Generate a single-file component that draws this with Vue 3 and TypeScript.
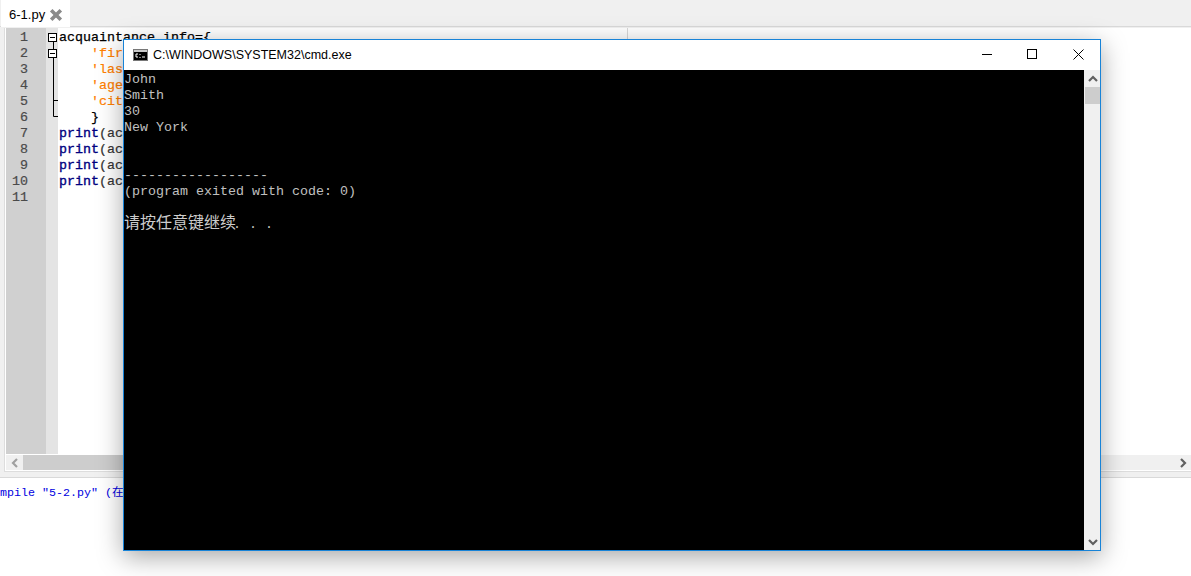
<script setup lang="ts">
const codeLines: { kind: string; text: string }[] = [
  { kind: 'plain', text: 'acquaintance_info={' },
  { kind: 'str', text: "    'fir" },
  { kind: 'str', text: "    'las" },
  { kind: 'str', text: "    'age" },
  { kind: 'str', text: "    'cit" },
  { kind: 'plain', text: '    }' },
  { kind: 'call', text: '(ac' },
  { kind: 'call', text: '(ac' },
  { kind: 'call', text: '(ac' },
  { kind: 'call', text: '(ac' },
  { kind: 'plain', text: ' ' },
]
const output: string[] = ['John', 'Smith', '30', 'New York', ' ', ' ', '------------------', '(program exited with code: 0)']
</script>

<template>
  <div class="app">
    <div class="tabbar">
      <div class="tab">
        <span class="tab-name">6-1.py</span>
        <svg class="tab-close" width="14" height="14" viewBox="0 0 14 14">
          <path d="M2.2 2.2 L11.8 11.8 M11.8 2.2 L2.2 11.8" stroke="#8a8a8a" stroke-width="3.6" fill="none" />
        </svg>
      </div>
    </div>
    <div class="editor-frame">
      <div class="editor-inner">
        <div class="editor">
          <div class="gutter">
            <div v-for="n in 11" :key="n" class="line-no">{{ n }}</div>
          </div>
          <div class="fold">
            <svg width="12" height="96" viewBox="0 0 12 96">
              <path d="M7.5 14 V88.5 H12 M7.5 72.5 H12" stroke="#000" fill="none" />
              <rect x="2.5" y="5.5" width="8" height="8" fill="#fff" stroke="#000" />
              <path d="M4 9.5 H9" stroke="#000" />
              <rect x="2.5" y="21.5" width="8" height="8" fill="#fff" stroke="#000" />
              <path d="M4 25.5 H9" stroke="#000" />
            </svg>
          </div>
          <div class="code">
            <div class="edge-guide"></div>
            <div v-for="(l, i) in codeLines" :key="i" class="code-line" :class="l.kind"><span v-if="l.kind === 'call'" class="kw">print</span>{{ l.text }}</div>
          </div>
        </div>
        <div class="hscroll">
          <div class="arrow-btn">
            <svg width="8" height="10" viewBox="0 0 8 10"><path d="M6 1 L2 5 L6 9" stroke="#a0a0a0" stroke-width="2.2" fill="none" /></svg>
          </div>
          <div class="hthumb"></div>
          <div class="arrow-btn">
            <svg width="8" height="10" viewBox="0 0 8 10"><path d="M2 1 L6 5 L2 9" stroke="#606060" stroke-width="2.2" fill="none" /></svg>
          </div>
        </div>
      </div>
    </div>
    <div class="output-panel">mpile "5-2.py" (在</div>

    <div class="cmd">
      <div class="titlebar">
        <svg class="cmd-icon" width="15" height="12" viewBox="0 0 15 12">
          <rect x="0.5" y="0.5" width="14" height="11" fill="#000" stroke="#777" />
          <rect x="1" y="1" width="13" height="2" fill="#c8c8c8" />
          <path d="M3 5 H5 M3 8 H5 M3 5 V8 M7 5 V6 M7 8 V9 M9 8 H12" stroke="#fff" fill="none" />
        </svg>
        <span class="cmd-title">C:\WINDOWS\SYSTEM32\cmd.exe</span>
        <div class="win-buttons">
          <svg width="10" height="10" viewBox="0 0 10 10"><path d="M0 5.5 H10" stroke="#000" /></svg>
          <svg width="10" height="10" viewBox="0 0 10 10"><rect x="0.5" y="0.5" width="9" height="9" fill="none" stroke="#000" /></svg>
          <svg class="close-x" width="11" height="11" viewBox="0 0 11 11"><path d="M0.5 0.5 L10.5 10.5 M10.5 0.5 L0.5 10.5" stroke="#000" fill="none" /></svg>
        </div>
      </div>
      <div class="cmd-body">
        <div class="console">
          <div v-for="(t, i) in output" :key="i" class="console-line">{{ t }}</div>
          <div class="console-line press"><span class="press-cjk">请按任意键继续</span><span class="press-dots">. . .</span></div>
        </div>
        <div class="vscroll">
          <div class="v-arrow">
            <svg width="10" height="8" viewBox="0 0 10 8"><path d="M1 6 L5 2 L9 6" stroke="#606060" stroke-width="2.2" fill="none" /></svg>
          </div>
          <div class="vthumb"></div>
          <div class="v-space"></div>
          <div class="v-arrow">
            <svg width="10" height="8" viewBox="0 0 10 8"><path d="M1 2 L5 6 L9 2" stroke="#606060" stroke-width="2.2" fill="none" /></svg>
          </div>
        </div>
      </div>
    </div>
  </div>
</template>

<style>
html, body { margin: 0; background: #fff; overflow: hidden; }
</style>

<style scoped>
.app {
  position: relative;
  width: 1191px;
  height: 576px;
  overflow: hidden;
  display: flex;
  flex-direction: column;
  background: #fff;
}
.tabbar {
  height: 26px;
  background: #f0f0f0;
  border-bottom: 1px solid #d9d9d9;
  display: flex;
  flex: none;
  padding-left: 1px;
}
.tab {
  width: 69px;
  height: 27px;
  box-sizing: border-box;
  background: #fff;
  display: flex;
  align-items: center;
  padding: 2px 0 0 8px;
  gap: 4px;
  font: 13px "Liberation Sans", Arial, sans-serif;
  color: #000;
}
.tab-close { flex: none; }
.editor-frame {
  flex: none;
  height: 444px;
  padding: 1px 0 5px 4px;
  background: #f0f0f0;
  border-bottom: 1px solid #d9d9d9;
}
.editor-inner {
  height: 442px;
  padding: 0 0 1px 1px;
  background: #fff;
  border-left: 1px solid #ddd;
  border-bottom: 1px solid #ddd;
  display: flex;
  flex-direction: column;
}
.editor {
  height: 426px;
  display: flex;
  background: #fff;
  flex: none;
}
.gutter {
  width: 40px;
  padding-top: 2px;
  box-sizing: border-box;
  background: #d0d0d0;
  flex: none;
}
.line-no {
  height: 16px;
  padding-right: 18px;
  text-align: right;
  font: 13.33px/16px "Liberation Mono", monospace;
  color: #4a4a4a;
  -webkit-text-stroke: 0.2px #4a4a4a;
}
.fold {
  width: 12px;
  background: #e4e4e4;
  flex: none;
}
.fold svg { display: block; }
.code {
  position: relative;
  flex: 1;
  padding: 2px 0 0 1px;
  background: #fff;
  overflow: hidden;
}
.edge-guide {
  position: absolute;
  left: 569px;
  top: 0;
  bottom: 0;
  width: 1px;
  background: #d8d8d8;
}
.code-line {
  height: 16px;
  font: 13.33px/16px "Liberation Mono", monospace;
  white-space: pre;
  color: #000;
}
.code-line.plain { -webkit-text-stroke: 0.25px #000; }
.code-line.str { color: #ff8000; -webkit-text-stroke: 0.2px #ff8000; }
.code-line.call { color: #333; -webkit-text-stroke: 0.2px #333; }
.kw { color: #000080; -webkit-text-stroke: 0.35px #000080; }
.hscroll {
  height: 15px;
  margin-top: 1px;
  display: flex;
  background: #f0f0f0;
  flex: none;
}
.arrow-btn {
  width: 17px;
  flex: none;
  display: flex;
  align-items: center;
  justify-content: center;
}
.hthumb {
  width: 100px;
  background: #cdcdcd;
}
.hscroll .arrow-btn:last-child { margin-left: auto; }
.output-panel {
  flex: 1;
  padding-top: 7px;
  font: 11.67px/16px "Liberation Mono", "Noto Sans CJK SC", monospace;
  color: #0000e0;
  white-space: pre;
  overflow: hidden;
}
.cmd {
  position: absolute;
  left: 123px;
  top: 39px;
  width: 978px;
  height: 512px;
  box-sizing: border-box;
  border: 1px solid #1883d7;
  background: #fff;
  display: flex;
  flex-direction: column;
  box-shadow: 0 6px 24px rgba(0, 0, 0, 0.35);
}
.titlebar {
  height: 30px;
  flex: none;
  display: flex;
  align-items: center;
  padding-left: 9px;
  background: #fff;
}
.cmd-icon { flex: none; margin-right: 5px; }
.cmd-title {
  font: 12.5px "Liberation Sans", Arial, sans-serif;
  color: #000;
}
.win-buttons {
  margin-left: auto;
  display: flex;
  gap: 35px;
  padding: 0 16px 2px 0;
  align-items: center;
}
.win-buttons svg { display: block; }
.win-buttons .close-x { margin-left: 1px; }
.cmd-body {
  flex: 1;
  display: flex;
  min-height: 0;
}
.console {
  flex: 1;
  background: #000;
  padding-top: 2px;
  color: #c0c0c0;
  font: 13.33px/16px "Liberation Mono", monospace;
}
.console-line {
  height: 16px;
  white-space: pre;
}
.console-line.press {
  margin-top: 13px;
}
.press-cjk {
  font: 16px/16px "Noto Sans CJK SC", sans-serif;
  color: #cccccc;
}
.press-dots { margin-left: -3px; }
.vscroll {
  width: 16px;
  box-sizing: border-box;
  padding-left: 1px;
  flex: none;
  background: #f0f0f0;
  display: flex;
  flex-direction: column;
}
.v-arrow {
  height: 17px;
  flex: none;
  display: flex;
  align-items: center;
  justify-content: center;
}
.vthumb {
  height: 17px;
  background: #cdcdcd;
  flex: none;
}
.v-space { flex: 1; }
</style>
